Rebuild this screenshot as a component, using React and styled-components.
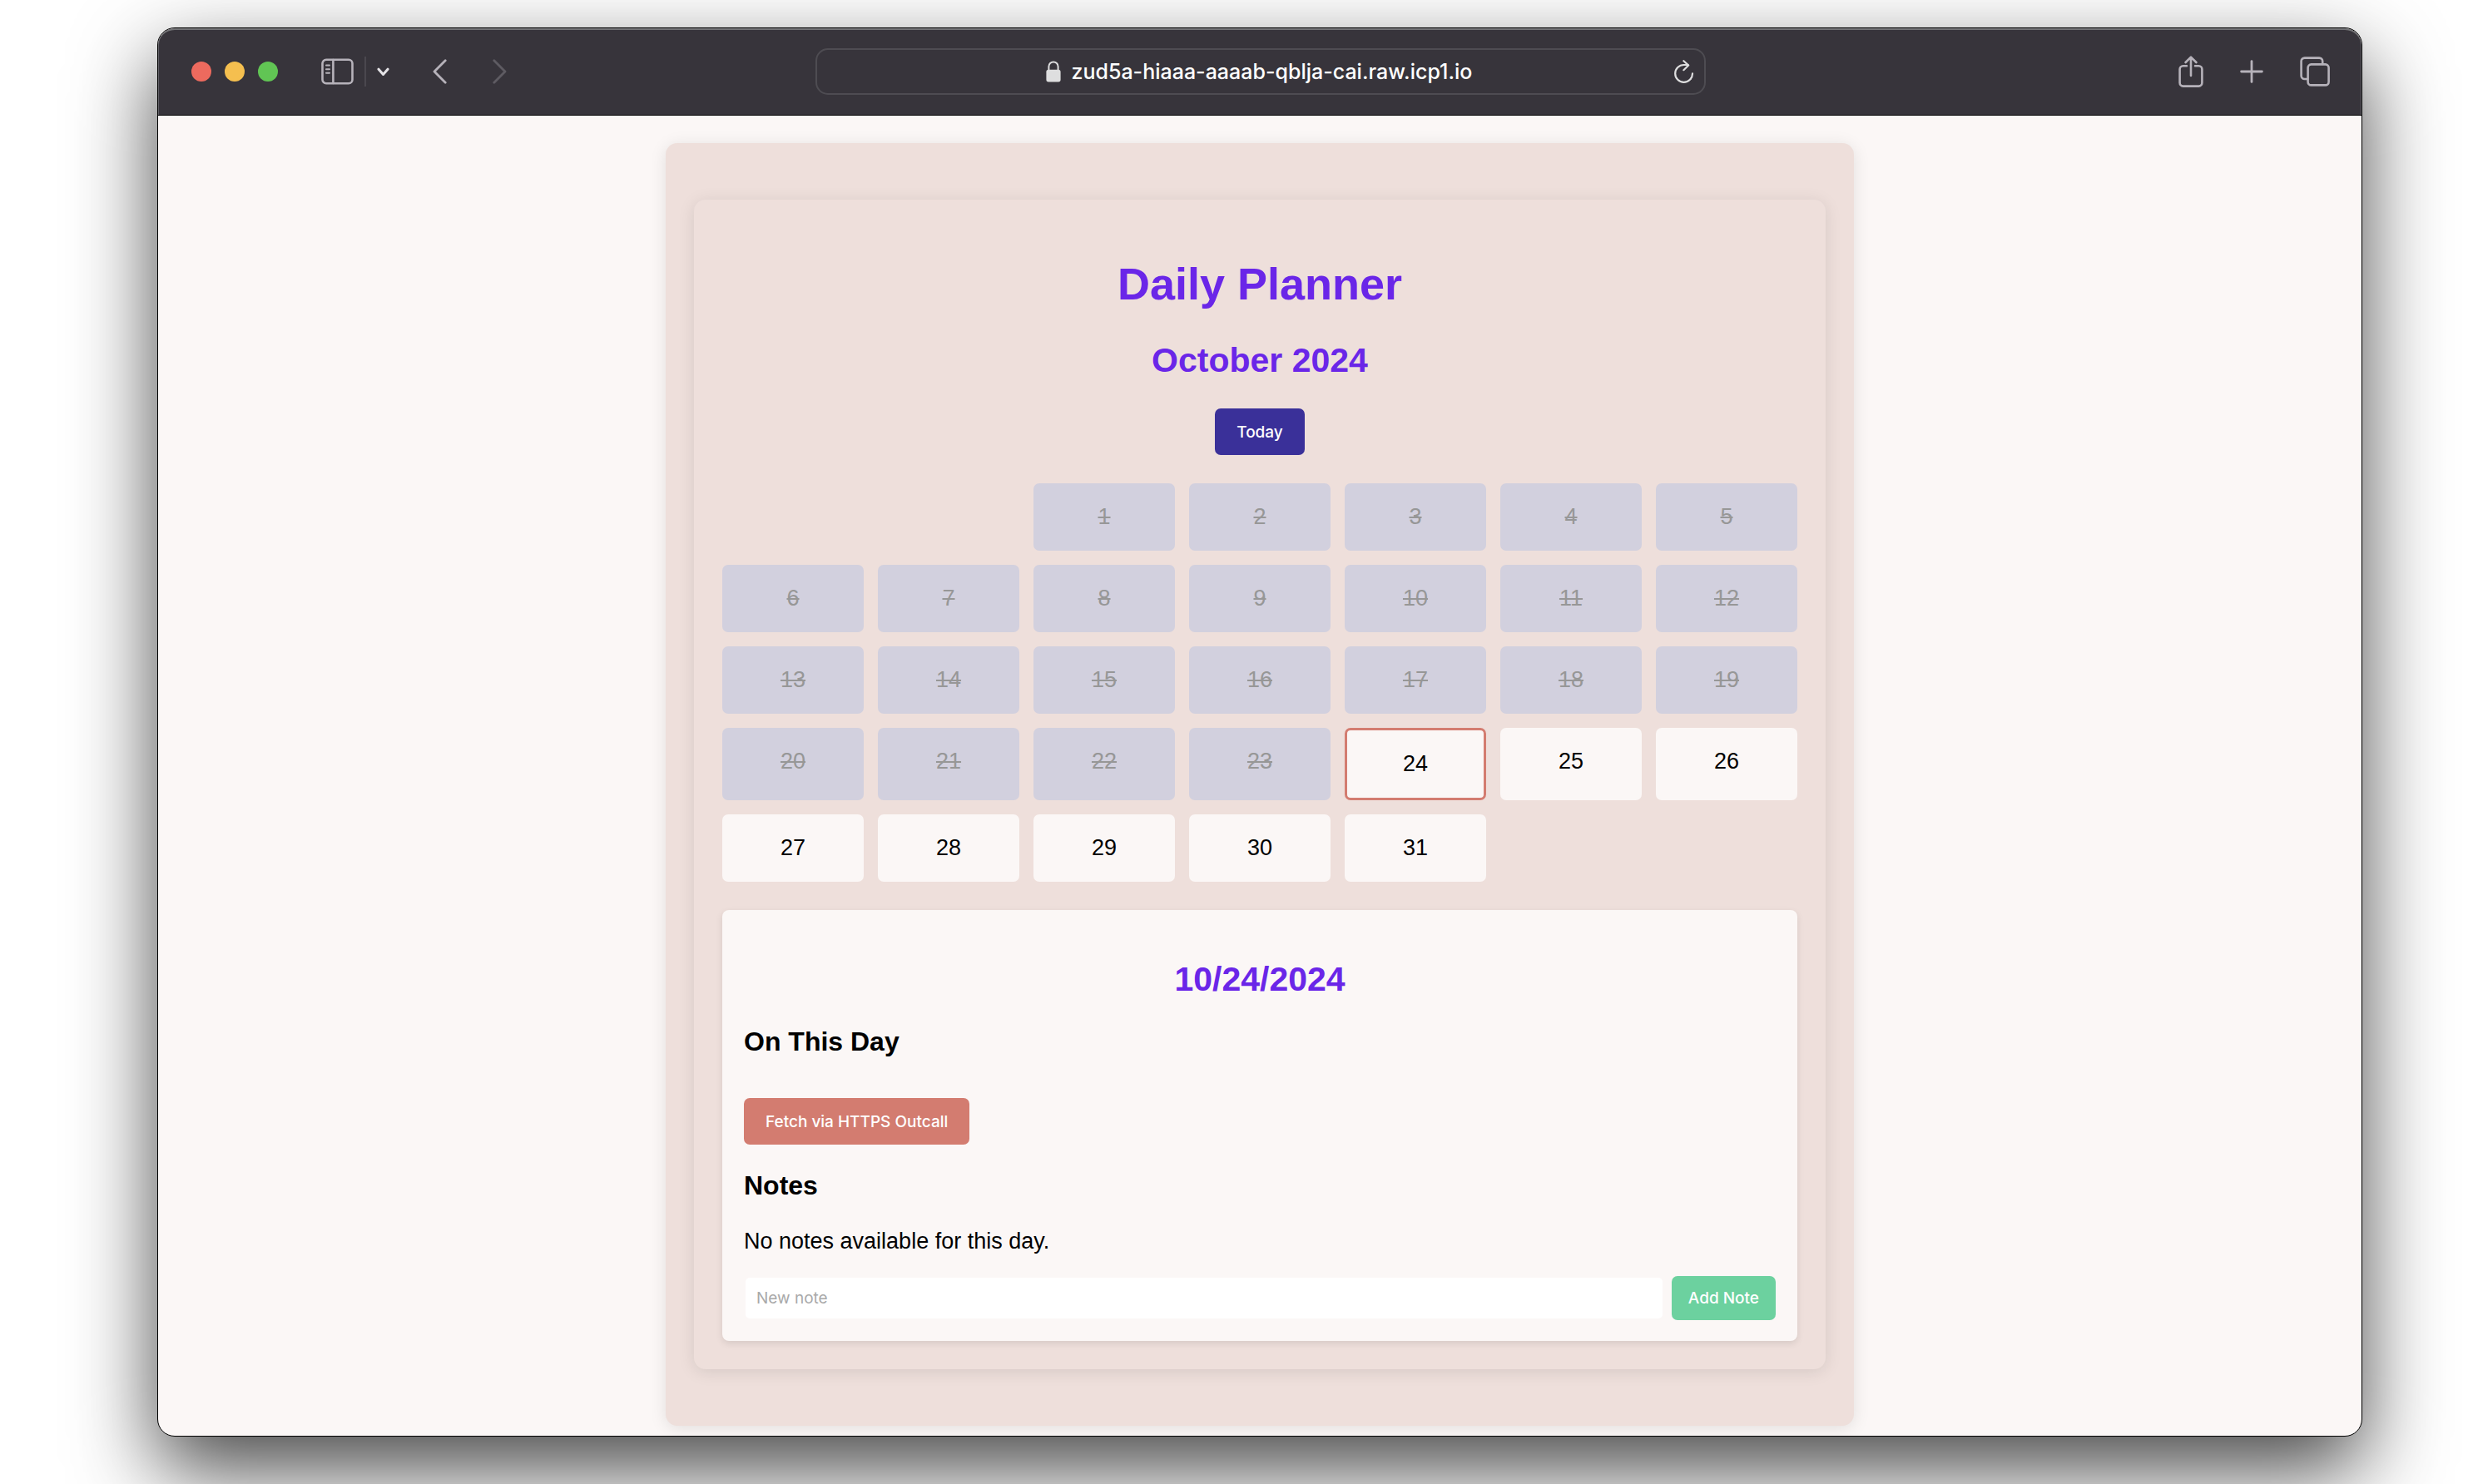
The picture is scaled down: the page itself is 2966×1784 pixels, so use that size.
import React, { useState } from "react";
import styled, { createGlobalStyle } from "styled-components";

const GlobalStyle = createGlobalStyle`
  *, *::before, *::after { box-sizing: border-box; }
  body {
    margin: 0;
    background: #ffffff;
    color: #000000;
    font-family: "Liberation Sans", Helvetica, Arial, sans-serif;
    font-size: 27px;
    line-height: 31px;
  }
  button, input { font: inherit; margin: 0; }
`;

const uiFont = `Inter, "Liberation Sans", sans-serif`;

/* ---------- Browser window ---------- */

const Desktop = styled.div`
  display: flex;
  min-height: 100vh;
  padding: 33px 127px 57px 189px;
  overflow: hidden;
`;

const BrowserWindow = styled.div`
  display: flex;
  flex: 1;
  flex-direction: column;
  min-width: 0;
  overflow: hidden;
  border: 1px solid #000000;
  border-radius: 21px;
  background: #fbf7f6;
  box-shadow: 0 40px 100px rgba(0, 0, 0, 0.72);
`;

const Toolbar = styled.header`
  display: flex;
  align-items: center;
  height: 105px;
  padding: 0 38px 0 40px;
  border-bottom: 1px solid #000000;
  border-radius: 20px 20px 0 0;
  background: #37343b;
  box-shadow: inset 0 2px 0 #747477, inset 1px 0 0 #626167, inset -1px 0 0 #626167;
  color: #b6b2ba;
`;

const ToolbarSide = styled.div`
  display: flex;
  flex: 1;
  align-items: center;
  justify-content: ${(p) => (p.$end ? "flex-end" : "flex-start")};
  gap: ${(p) => (p.$end ? "44px" : "52px")};
`;

const Cluster = styled.div`
  display: flex;
  align-items: center;
  gap: ${(p) => p.$gap}px;
`;

const WindowDot = styled.button`
  width: 24px;
  height: 24px;
  padding: 0;
  border: 0;
  border-radius: 50%;
  background: ${(p) => p.$color};
`;

const IconButton = styled.button`
  display: flex;
  padding: 0;
  border: 0;
  background: none;
  color: ${(p) => p.$color || "inherit"};

  svg {
    display: block;
    fill: none;
    stroke: currentColor;
    stroke-linecap: round;
    stroke-linejoin: round;
  }
`;

const Divider = styled.span`
  width: 2px;
  height: 36px;
  background: #4a474e;
`;

const AddressBar = styled.div`
  display: flex;
  flex: 0 1 1070px;
  align-items: center;
  height: 56px;
  padding: 0 12px;
  border: 2px solid #4e4c52;
  border-radius: 15px;
`;

const AddressSide = styled.div`
  display: flex;
  flex: 1;
  justify-content: flex-end;
`;

const Address = styled.input`
  width: 486px;
  height: 36px;
  padding: 0;
  border: 0;
  outline: 0;
  background: none;
  color: #ffffff;
  font-family: ${uiFont};
  font-size: 25px;
  font-weight: 500;
`;

/* ---------- Planner ---------- */

const Page = styled.main`
  flex: 1;
  padding: 33px 34px 12px;
`;

const OuterCard = styled.div`
  max-width: 1428px;
  margin: 0 auto;
  padding: 68px 34px;
  border-radius: 14px;
  background: #eedfdb;
  box-shadow: 0 3px 20px rgba(0, 0, 0, 0.1);
`;

const PlannerCard = styled.div`
  display: flex;
  flex-direction: column;
  align-items: center;
  gap: 34px;
  padding: 70px 34px 34px;
  border-radius: 14px;
  background: #eedfdb;
  box-shadow: 0 3px 20px rgba(0, 0, 0, 0.1);
`;

const Title = styled.h1`
  margin: 0 0 4px;
  color: #6a26e8;
  font-size: 54px;
  line-height: 62px;
`;

const Heading = styled.h2`
  margin: 0;
  color: #6a26e8;
  font-size: 41px;
  line-height: 47px;
  text-align: center;
`;

const Subheading = styled.h3`
  margin: 0;
  font-size: 32px;
  line-height: 34px;
`;

const ActionButton = styled.button`
  height: ${(p) => (p.$compact ? "53px" : "56px")};
  padding: 0 ${(p) => (p.$compact ? "20px" : "26px")};
  border: 0;
  border-radius: 7px;
  background: ${(p) => p.$color};
  color: #ffffff;
  font-family: ${uiFont};
  font-size: 19px;
  font-weight: 500;
  white-space: nowrap;
`;

const Calendar = styled.div`
  display: grid;
  grid-template-columns: repeat(7, 1fr);
  gap: 17px;
  width: 100%;
`;

const Day = styled.button`
  display: flex;
  align-items: flex-start;
  justify-content: center;
  min-height: 81px;
  padding: 17px;
  border: ${(p) => (p.$selected ? "3px solid #d37c70" : "0")};
  border-radius: 7px;
  background: #fbf7f6;
  color: #000000;
  line-height: 47px;

  &:first-child { grid-column-start: 3; }

  &:disabled {
    background: #d2d0de;
    color: #979797;
    text-decoration: line-through;
  }
`;

const Details = styled.section`
  display: flex;
  flex-direction: column;
  width: 100%;
  padding: 60px 26px 25px;
  border-radius: 8px;
  background: #fbf7f6;
  box-shadow: 0 3px 9px rgba(0, 0, 0, 0.1);
`;

const OnThisDay = styled.div`
  display: flex;
  flex-direction: column;
  align-items: flex-start;
  gap: 51px;
  margin: 34px 0 32px;
`;

const EmptyText = styled.p`
  margin: 35px 0 26px;
`;

const NoteForm = styled.form`
  display: flex;
  align-items: center;
  gap: 11px;
  padding-left: 2px;
`;

const NoteInput = styled.input`
  flex: 1;
  min-width: 0;
  height: 49px;
  padding: 0 13px;
  border: 0;
  border-radius: 5px;
  background: #ffffff;
  color: #000000;
  font-family: ${uiFont};
  font-size: 19px;

  &::placeholder { color: #a9a9a9; opacity: 1; }
`;

const TODAY = 24;
const days = Array.from({ length: 31 }, (_, i) => i + 1);

const SidebarIcon = () => (
  <svg width="39" height="32" viewBox="0 0 39 32" strokeWidth="2.6">
    <rect x="1.5" y="1.8" width="36" height="28.4" rx="4.5" />
    <path d="M14.4 2v28" />
    <path d="M6 8.6h4M6 13.2h4M6 17.8h4" strokeWidth="2" />
  </svg>
);

const ChevronDown = () => (
  <svg width="15" height="11" viewBox="0 0 15 11" strokeWidth="3">
    <path d="M2 2.2l5.5 6.3L13 2.2" />
  </svg>
);

const ChevronLeft = () => (
  <svg width="17" height="30" viewBox="0 0 17 30" strokeWidth="2.8">
    <path d="M15.2 1.8L2 15l13.2 13.2" />
  </svg>
);

const ChevronRight = () => (
  <svg width="17" height="30" viewBox="0 0 17 30" strokeWidth="2.8">
    <path d="M1.8 1.8L15 15 1.8 28.2" />
  </svg>
);

const LockIcon = () => (
  <svg width="18" height="26" viewBox="0 0 18 26" aria-hidden="true">
    <path d="M3.4 12V7a5.6 5.6 0 0 1 11.2 0v5" fill="none" stroke="#dededf" strokeWidth="2" />
    <rect x="0.4" y="10.8" width="17.2" height="14.6" rx="2.6" fill="#dededf" />
  </svg>
);

const ReloadIcon = () => (
  <svg width="24" height="28" viewBox="0 0 24 28" strokeWidth="2.2">
    <path d="M22 16.4A10.4 10.4 0 1 1 11.6 6h5" />
    <path d="M11.4 1.2l5.8 5.3-5.8 5.7" />
  </svg>
);

const ShareIcon = () => (
  <svg width="30" height="38" viewBox="0 0 30 38" strokeWidth="2.6">
    <path d="M10 12.2H5.6a4 4 0 0 0-4 4v16.4a4 4 0 0 0 4 4h18.8a4 4 0 0 0 4-4V16.2a4 4 0 0 0-4-4H20" />
    <path d="M15 24V2M8.6 8L15 1.6 21.4 8" />
  </svg>
);

const PlusIcon = () => (
  <svg width="28" height="28" viewBox="0 0 28 28" strokeWidth="2.8">
    <path d="M14 1.6v24.8M1.6 14h24.8" />
  </svg>
);

const TabsIcon = () => (
  <svg width="36" height="36" viewBox="0 0 36 36" strokeWidth="2.6">
    <rect x="9.6" y="9.4" width="25" height="25" rx="4" />
    <path d="M9 27H5.6a4 4 0 0 1-4-4V5.6a4 4 0 0 1 4-4h17.6a4 4 0 0 1 4 4V9" />
  </svg>
);

export default function App() {
  const [selected, setSelected] = useState(TODAY);
  const [note, setNote] = useState("");

  return (
    <>
      <GlobalStyle />
      <Desktop>
        <BrowserWindow>
          <Toolbar>
            <ToolbarSide>
              <Cluster $gap={16}>
                <WindowDot $color="#ed6a5e" aria-label="Close" />
                <WindowDot $color="#f5bf4f" aria-label="Minimize" />
                <WindowDot $color="#61c554" aria-label="Full screen" />
              </Cluster>
              <Cluster $gap={13}>
                <IconButton aria-label="Sidebar"><SidebarIcon /></IconButton>
                <Divider />
                <IconButton aria-label="Tab groups" $color="#e4e2e6"><ChevronDown /></IconButton>
              </Cluster>
              <Cluster $gap={55}>
                <IconButton aria-label="Back"><ChevronLeft /></IconButton>
                <IconButton aria-label="Forward" $color="#5e5b62"><ChevronRight /></IconButton>
              </Cluster>
            </ToolbarSide>
            <AddressBar>
              <AddressSide />
              <Cluster $gap={13}>
                <LockIcon />
                <Address aria-label="Address" defaultValue="zud5a-hiaaa-aaaab-qblja-cai.raw.icp1.io" />
              </Cluster>
              <AddressSide>
                <IconButton aria-label="Reload" $color="#dededf"><ReloadIcon /></IconButton>
              </AddressSide>
            </AddressBar>
            <ToolbarSide $end>
              <IconButton aria-label="Share"><ShareIcon /></IconButton>
              <IconButton aria-label="New tab"><PlusIcon /></IconButton>
              <IconButton aria-label="Show tabs"><TabsIcon /></IconButton>
            </ToolbarSide>
          </Toolbar>

          <Page>
            <OuterCard>
              <PlannerCard>
                <Title>Daily Planner</Title>
                <Heading>October 2024</Heading>
                <ActionButton $color="#3a3099" onClick={() => setSelected(TODAY)}>Today</ActionButton>
                <Calendar>
                  {days.map((day) => (
                    <Day
                      key={day}
                      disabled={day < TODAY}
                      $selected={day === selected}
                      onClick={() => setSelected(day)}
                    >
                      {day}
                    </Day>
                  ))}
                </Calendar>
                <Details>
                  <Heading>10/{selected}/2024</Heading>
                  <OnThisDay>
                    <Subheading>On This Day</Subheading>
                    <ActionButton $color="#d37c70">Fetch via HTTPS Outcall</ActionButton>
                  </OnThisDay>
                  <Subheading>Notes</Subheading>
                  <EmptyText>No notes available for this day.</EmptyText>
                  <NoteForm onSubmit={(e) => e.preventDefault()}>
                    <NoteInput
                      aria-label="New note"
                      placeholder="New note"
                      value={note}
                      onChange={(e) => setNote(e.target.value)}
                    />
                    <ActionButton $compact $color="#6cd19f">Add Note</ActionButton>
                  </NoteForm>
                </Details>
              </PlannerCard>
            </OuterCard>
          </Page>
        </BrowserWindow>
      </Desktop>
    </>
  );
}
